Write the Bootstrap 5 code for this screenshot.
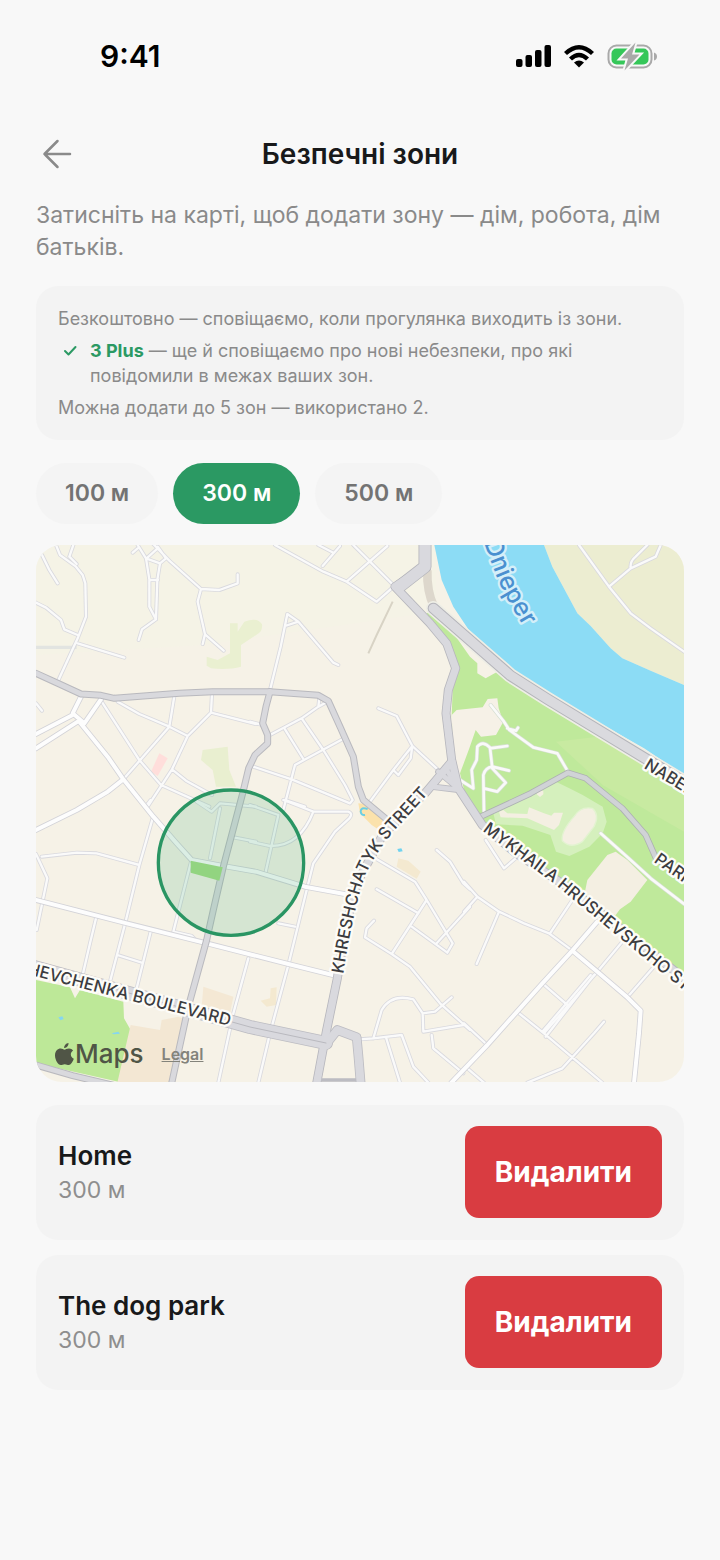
<!DOCTYPE html>
<html lang="uk">
<head>
<meta charset="utf-8">
<meta name="viewport" content="width=device-width, initial-scale=1">
<title>Безпечні зони</title>
<link href="https://cdn.jsdelivr.net/npm/bootstrap@5.3.0/dist/css/bootstrap.min.css" rel="stylesheet">
<style>
  body { background: #f8f8f8; color: #18191a; font-family: Inter, "Liberation Sans", sans-serif; }
  .status { height: 112px; padding: 0 63px 0 100px; }
  .clock { font-size: 30px; font-weight: 600; color: #000; line-height: 32px; }
  .screen { padding: 0 36px 36px; }
  .topbar { height: 84px; }
  .back { left: 0; top: 0; bottom: 0; width: 44px; color: #8a8a8a; }
  .screen-title { font-size: 28px; font-weight: 600; line-height: 36px; }
  .intro { font-size: 23px; line-height: 32px; color: #8a8a8a; padding-top: 3px; margin-bottom: 23px; }
  .panel { background: #f3f3f3; border-radius: 22px; }
  .info { padding: 20px 22px; font-size: 18px; line-height: 25px; color: #8a8a8a; gap: 7px; margin-bottom: 23px; }
  .brand { color: #2b9963; font-weight: 700; }
  .tick { width: 32px; height: 25px; color: #2b9963; }
  .radii { gap: 15px; margin-bottom: 21px; }
  .radii .btn { --bs-btn-bg: #f4f4f4; --bs-btn-color: #737373; --bs-btn-active-bg: #2b9963; --bs-btn-active-color: #fff; --bs-btn-border-width: 0; --bs-btn-border-radius: 31px; font-size: 23px; font-weight: 600; line-height: 33px; padding: 14px 29px; }
  .map { border-radius: 26px; margin-bottom: 23px; }
  .map-credit { left: 18px; bottom: 12px; gap: 18px; color: #505546; }
  .map-brand { font-size: 26px; font-weight: 500; line-height: 32px; }
  .map-legal { font-size: 16px; font-weight: 600; line-height: 24px; color: #83837b; }
  .map-label { font-family: Inter, "Liberation Sans", sans-serif; font-size: 50px; font-weight: 500; fill: #3c3c40; stroke: #fdfcf8; stroke-width: 14px; stroke-linejoin: round; paint-order: stroke; }
  .map-river { font-size: 75px; fill: #4a90d0; stroke: #d4eff9; }
  .zones { gap: 15px; }
  .zone { padding: 21px 22px 22px; }
  .zone-name { font-size: 26px; font-weight: 600; line-height: 36px; }
  .zone-size { font-size: 23px; line-height: 32px; color: #8e8e8e; }
  .remove { --bs-btn-bg: #d93c41; --bs-btn-color: #fff; --bs-btn-hover-bg: #c43338; --bs-btn-hover-color: #fff; --bs-btn-border-width: 0; --bs-btn-border-radius: 14px; font-size: 28px; font-weight: 700; line-height: 36px; padding: 28px 30px; }
</style>
</head>
<body>
<div class="status d-flex align-items-center justify-content-between">
  <span class="clock">9:41</span>
  <div class="d-flex align-items-center">
    <svg width="142" height="30" viewBox="0 0 142 30" aria-hidden="true">
      <g fill="#000"><rect x="1" y="18" width="6.500" height="8" rx="2"/><rect x="10.500" y="14" width="6.500" height="12" rx="2"/><rect x="20" y="9" width="6.500" height="17" rx="2"/><rect x="29.500" y="4" width="6.500" height="22" rx="2"/></g>
      <g fill="none" stroke="#000" stroke-width="4.400"><path d="M50.500 12.500Q64 0 77.500 12.500"/><path d="M55.500 18Q64 10 72.500 18"/></g>
      <path d="M59 21.500Q64 17.500 69 21.500L64 26.500Z"/>
      <rect x="93.500" y="4.500" width="43" height="22" rx="8" fill="none" stroke="#a9a9a9" stroke-width="2"/>
      <rect x="96.500" y="7.500" width="37" height="16" rx="5" fill="#35c759"/>
      <path d="M139 11.500q3 1 3 4t-3 4z" fill="#a9a9a9"/>
      <path d="M120.500 1.500L106 17.500H113L109.500 29.500L124.500 13.500H117Z" fill="#a9a9a9" stroke="#f8f8f8" stroke-width="4" paint-order="stroke"/>
    </svg>
  </div>
</div>

<main class="screen">
  <header class="topbar position-relative d-flex align-items-center justify-content-center">
    <button type="button" class="back btn border-0 p-0 position-absolute d-flex align-items-center" aria-label="Назад">
      <svg width="44" height="36" viewBox="0 0 44 36" fill="none" stroke="currentColor" stroke-width="2.500" stroke-linecap="round" stroke-linejoin="round"><path d="M34 18H8.500M21.500 5L8.500 18L21.500 31"/></svg>
    </button>
    <h1 class="screen-title m-0">Безпечні зони</h1>
  </header>

  <p class="intro">Затисніть на карті, щоб додати зону — дім, робота, дім батьків.</p>

  <section class="panel info d-flex flex-column">
    <div>Безкоштовно — сповіщаємо, коли прогулянка виходить із зони.</div>
    <div class="d-flex">
      <svg class="tick flex-shrink-0" viewBox="0 0 32 25" fill="none" stroke="currentColor" stroke-width="2" stroke-linecap="round" stroke-linejoin="round" aria-hidden="true"><path d="M7 13L10.500 16.500L17.500 9"/></svg>
      <div><span class="brand">3 Plus</span> — ще й сповіщаємо про нові небезпеки, про які повідомили в межах ваших зон.</div>
    </div>
    <div>Можна додати до 5 зон — використано 2.</div>
  </section>

  <div class="radii d-flex" role="radiogroup" aria-label="Радіус зони">
    <input class="btn-check" type="radio" name="radius" id="r100"><label class="btn" for="r100">100 м</label>
    <input class="btn-check" type="radio" name="radius" id="r300" checked><label class="btn" for="r300">300 м</label>
    <input class="btn-check" type="radio" name="radius" id="r500"><label class="btn" for="r500">500 м</label>
  </div>

  <section class="map position-relative overflow-hidden">
    <svg class="d-block w-100" viewBox="0 0 1944 1611" role="img" aria-label="Карта зон">
      <defs>
        <g id="streets">
          <g transform="translate(0 -15)"><path d="M60 15L72 45 120 80 140 105 148 130 150 230 125 295 65 425M112 15L100 50 122 72M18 45L40 90 65 130M0 188L30 203 75 240 85 268 125 285M125 310L265 353M305 15L330 55 340 118 340 200 360 238 318 268 308 300M290 38L305 25M365 20L390 55 372 70 364 120 360 238M330 55L372 70M335 52L365 25M340 120H366M350 10L400 62 495 147 550 150 605 130V103M495 147L485 185 507 283 500 312M507 283L563 332M0 490L18 512M245 485L310 522 400 560 455 588M415 468L400 560 262 718M528 460L525 518 455 588 408 688 335 800M525 518L660 552M197 485L310 660 375 735 520 800M408 688L450 722 528 765"/></g>
          <g transform="translate(642 -15)"><path d="M75 15L220 95 290 125 380 185 425 145M205 15L250 38M270 18L218 78M310 15L360 65 430 135M412 18L290 125M265 375L250 368 145 245 112 222 92 320 60 450M145 245L105 258M0 545L38 555M60 585L155 535 205 500 232 485M205 500L208 475M105 568L162 660M155 535L220 630 285 735 308 780 300 790M283 595L162 660 135 675 100 810M10 680L125 718 300 790M385 505L440 528 487 618 565 690M487 618L430 690 360 785M487 618L482 655 445 705 430 690M105 780L165 800"/></g>
          <g transform="translate(1284 -15)"><path d="M345 15L435 140 500 220 560 265 660 335M435 140L500 85Q497 65 515 50L550 15M500 85L575 50 590 15"/></g>
          <g transform="translate(-18 765)"><path d="M35 170L140 158 200 160 328 195M18 162L52 235 20 390M368 55L328 195 285 372 240 545M198 355L180 430 158 525M362 395L320 565M262 465L335 488M483 185L430 395 485 408 495 418M570 25L540 175M500 5L545 35 570 10 678 20M610 112L678 125M655 475L610 640 565 848M348 18L362 0"/></g>
          <g transform="translate(642 765)"><path d="M100 0L190 35 295 35Q310 40 298 55L255 95 190 190 165 290 115 495 60 700 25 848M190 35Q150 140 60 138L0 125M85 45L45 225M85 370L135 380M0 15L85 45M370 172L495 245 530 300 608 430 592 458 485 380M380 268L505 340M530 300L425 462M372 362L350 385 345 412 425 462 480 500 570 610 660 690M660 320L560 430M560 150L600 185 640 250 660 268M370 715L395 630Q425 580 490 598L518 640 520 695 640 675M605 592L555 635 518 640M330 718L370 715 455 705 490 800 535 848M408 712L450 848M545 705L550 745 640 820"/></g>
          <g transform="translate(1284 765)"><path d="M0 245L40 290 105 335 180 370 255 400 325 452M105 335L38 492M40 290L0 335M325 300L258 400M475 425L400 515 240 700M380 525L235 695M390 525L245 710M570 500L490 592M235 550L310 615M165 640L240 700 325 772 415 848M0 670L70 735M10 805L60 848M420 665L390 700 325 772 295 805 190 848M65 120L120 205 155 175"/></g>
        </g>
        <g id="avenues">
          <path d="M135 455L110 505 145 535 195 463M0 567L110 510M0 610L125 530M130 530L215 635 262 703 352 815 422 895 467 945 562 963 660 980 807 1025 942 1050M0 855L122 795 215 740 262 703M0 1065L272 1135 512 1195 757 1257 902 1293"/>
          <g transform="translate(1284 765)"><path d="M325 452L400 515 490 592 530 632 525 700 510 848M400 365L325 452 235 550 70 735-38 848"/></g>
        </g>
        <g id="highways">
          <path d="M0 385L70 417 135 447 195 451 235 460 430 445 530 440 702 440 847 451 877 468 912 545 952 635 967 725 982 765 1070 838"/>
          <path d="M702 440L690 485 680 535 695 570 695 595 657 630 638 670 620 745 562 965 532 1095 512 1185 457 1385 407 1615"/>
          <path d="M0 1560L110 1592 250 1625"/>
        </g>
        <g id="arteries">
          <path d="M1167 0V65L1077 125 1182 235 1232 295 1259 370 1237 435 1230 505 1247 645 1267 730 1339 840 1434 920 1600 1030 1944 1300"/>
          <path d="M1247 650L1167 745 1040 870 965 1010 930 1140 904 1300 872 1455 842 1615"/>
        </g>
        <path id="ramps" d="M1187 725L1272 735M1207 680L1267 730M1228 668L1267 730"/>
        <path id="parkpaths" d="M1364 480L1404 530 1420 555 1492 607 1564 625 1596 680M1414 550L1440 557 1446 548M1272 705L1312 730 1307 675 1322 645 1324 605Q1340 585 1362 608L1369 670 1409 713 1384 740 1344 730M1362 610L1414 603M1344 800L1342 690Q1348 668 1369 665L1419 677M1694 865L1784 945 1844 1000 1944 1077"/>
        <path id="embankment" d="M1192 190L1284 270 1424 392 1534 462 1844 650 1960 720"/>
        <path id="plaza" d="M880 1485L904 1455 962 1477 967 1530 974 1615"/>
        <path id="boulevard" d="M-20 1262L300 1350 642 1446 870 1494"/>
        <path id="parkroad" d="M1334 815L1484 745 1596 683 1649 700 1759 790 1829 870 1860 940 1960 1010"/>
        <path id="p-khr" d="M922 1287C935 1200 955 1090 985 1000C1010 935 1060 870 1100 830L1200 720"/>
        <path id="p-myk" d="M1339 857L1546 1010 1656 1100 1780 1202 1990 1375"/>
        <path id="p-shev" d="M-142 1259L-2 1294 250 1359 580 1443"/>
        <path id="p-nab" d="M1822 668L2040 800"/>
        <path id="p-park" d="M1852 950L2080 1110"/>
        <path id="p-dni" d="M1344 -9Q1375 85 1408 152L1500 310"/>
      </defs>

      <rect width="1944" height="1611" fill="#f6f2e7"/>
      <path d="M0 0H1200V200L500 300 0 330Z" fill="#f5f3e6"/>
      <!-- river and far bank -->
      <path d="M1524 0L1549 65 1624 205 1664 243 1724 310 1759 340 1844 377 1944 420V0Z" fill="#ecedd1"/>
      <path d="M1195 0L1217 105 1252 185 1297 253 1434 375 1534 445 1684 530 1824 610 1944 690V420L1844 377 1759 340 1724 310 1664 243 1624 205 1549 65 1524 0Z" fill="#8cdcf5"/>
      <!-- riverside park -->
      <path d="M1172 205L1192 200 1242 250 1302 335 1324 355V385L1349 400 1384 380 1434 420 1534 485 1684 575 1844 665 1944 740V1290L1339 840 1260 700 1247 510 1250 435 1268 375Z" fill="#bfe99b"/>
      <path d="M1560 590L1684 575 1844 665 1944 740V860L1700 720Z" fill="#c8eaa1"/>
      <path d="M1247 510L1262 495 1340 487 1355 462 1384 460 1388 490 1402 530 1380 570 1335 575 1319 555 1300 610 1272 685 1288 750 1332 815 1300 800 1256 700Z" fill="#f6f1e7"/>
      <path d="M1372 805L1500 745 1560 710 1600 730 1640 750 1700 785 1712 830 1700 865 1660 905 1600 933 1560 920 1543 870 1460 842 1380 838Z" fill="#d5f0bd"/>
      <g transform="translate(1284 765)" fill="#f4efe2">
        <path d="M330 50Q350 18 385 25Q408 45 390 80L355 125Q320 148 295 122Q290 95 330 50Z" stroke="#e3f3d1" stroke-width="4"/>
        <path d="M195 22L240 40 262 47 270 38 297 38 285 75 270 90 190 55 110 52 105 35 118 30 130 40 190 42Z"/>
        <path d="M455 155L490 180 550 240 500 305 468 328 455 345 400 330 362 280 370 240 430 165Z"/>
        <path d="M222-32l16 5v10l-10 8-10-8z"/>
      </g>
      <!-- small greens and buildings -->
      <path d="M582 235H605V260L625 230Q665 215 678 238 680 255 668 265L615 300V365Q580 375 525 370L512 362V335L545 345 582 325Z" fill="#eaf0d1"/>
      <g transform="translate(0 -15)" fill="#e9efd0">
        <path d="M500 630L575 620 580 690 600 740 540 740 530 690 495 660Z"/>
        <path d="M370 640L395 655 365 708 345 695Z" fill="#ffdedb"/>
      </g>
      <g transform="translate(-18 765)">
        <path d="M18 540L120 562 135 595 150 570 280 605 282 655 302 690 265 845 18 790Z" fill="#bde898"/>
        <path d="M302 675L390 690 395 660 445 650 470 660 422 848H262Z" fill="#f3e7d3"/>
        <path d="M520 560L610 590 600 640 515 620Z" fill="#f4e8d4"/>
        <path d="M85 652l12-3 4 8-10 4zM245 700l20-5 5 6-18 2z" fill="#86d6f0"/>
      </g>
      <g transform="translate(642 765)">
        <path d="M325 10L345 12 420 75 400 98 365 75 330 40Z" fill="#fbe2ac"/>
        <path d="M353 27Q332 20 332 35 334 47 345 45" fill="none" stroke="#6bcfe3" stroke-width="6"/>
        <path d="M442 147l12-2 4 9-12 2z" fill="#6fd3f0"/>
        <path d="M445 175L475 182 512 215 500 236 440 200Z" fill="#f4e9d0"/>
        <path d="M62 565L80 562 78 615 50 620 32 602 60 595Z" fill="#f4e9d0"/>
      </g>
      <path d="M1174 75Q1172 140 1194 185" fill="none" stroke="#ddd7cc" stroke-width="26"/>
      <path d="M1070 170L1022 270 997 325" fill="none" stroke="#d8d3c5" stroke-width="6"/>
      <path d="M0 307H122" stroke="#e2e4e1" stroke-width="10"/>

      <!-- road network: casing first, surface on top -->
      <g fill="none" stroke-linejoin="round" stroke-linecap="round">
        <use href="#streets" stroke="#d9d9de" stroke-width="12"/>
        <use href="#streets" stroke="#fafafa" stroke-width="7"/>
        <use href="#avenues" stroke="#d3d3d8" stroke-width="17"/>
        <use href="#avenues" stroke="#fdfdfd" stroke-width="12"/>
        <use href="#parkpaths" stroke="#d6dfd3" stroke-width="12"/>
        <use href="#parkpaths" stroke="#fafaf9" stroke-width="8"/>
        <use href="#parkroad" stroke="#adb1b2" stroke-width="19"/>
        <use href="#parkroad" stroke="#d0d3d6" stroke-width="14"/>
        <use href="#highways" stroke="#b9b9be" stroke-width="21"/>
        <use href="#highways" stroke="#d9d9dd" stroke-width="15"/>
        <use href="#ramps" stroke="#bcbcc2" stroke-width="19"/>
        <use href="#arteries" stroke="#b7b7bd" stroke-width="27"/>
        <path d="M1167 0V65L1090 125" stroke="#b7b7bd" stroke-width="39"/>
        <use href="#boulevard" stroke="#bcbcc2" stroke-width="42"/>
        <use href="#plaza" stroke="#bcbcc2" stroke-width="29"/>
        <path d="M850 1605H970" stroke="#bcbcc2" stroke-width="10"/>
        <use href="#ramps" stroke="#d9d9de" stroke-width="14"/>
        <use href="#arteries" stroke="#d9d9de" stroke-width="22"/>
        <path d="M1167 0V65L1090 125" stroke="#d9d9de" stroke-width="34"/>
        <use href="#boulevard" stroke="#d9d9de" stroke-width="37"/>
        <use href="#plaza" stroke="#d9d9de" stroke-width="24"/>
        <use href="#boulevard" stroke="#b9b9bf" stroke-width="3"/>
        <use href="#embankment" stroke="#eeeee6" stroke-width="44"/>
        <use href="#embankment" stroke="#b4b4ba" stroke-width="34"/>
        <use href="#embankment" stroke="#dadade" stroke-width="28"/>
      </g>

      <!-- selected zone -->
      <path d="M464 947L560 967 550 1007 464 983Z" fill="#a4dd83"/>
      <circle cx="585" cy="953" r="218" fill="#41ae76" fill-opacity=".18" stroke="#2a9563" stroke-width="10"/>

      <text class="map-label"><textPath href="#p-khr">KHRESHCHATYK STREET</textPath></text>
      <text class="map-label"><textPath href="#p-myk">MYKHAILA HRUSHEVSKOHO ST</textPath></text>
      <text class="map-label" text-anchor="end"><textPath href="#p-shev" startOffset="100%">SHEVCHENKA BOULEVARD</textPath></text>
      <text class="map-label"><textPath href="#p-nab">NABER</textPath></text>
      <text class="map-label"><textPath href="#p-park">PARK</textPath></text>
      <text class="map-label map-river"><textPath href="#p-dni">Dnieper</textPath></text>
    </svg>
    <div class="map-credit position-absolute d-flex align-items-center">
      <span class="map-brand d-flex align-items-center">
        <svg width="21" height="25" viewBox="0 0 21 25" fill="currentColor" aria-hidden="true"><path d="M14.500 1C14.700 3.800 12.600 6 10.200 6C10 3.500 12 1.300 14.500 1ZM10.500 7.700C11.600 7.700 12.700 6.500 15 6.500C16.800 6.500 18.200 7.300 19.100 8.600C15.800 10.700 16.200 15.300 19.800 16.800C18.700 20 16.800 23 14.800 23C13.300 23 12.600 22.200 10.800 22.200C9 22.200 8.100 23 6.800 23C4.200 23 1 17.900 1 13.500C1 9 3.800 6.600 6.600 6.600C8.300 6.600 9.600 7.700 10.500 7.700Z"/></svg>
        Maps
      </span>
      <a class="map-legal" href="#legal">Legal</a>
    </div>
  </section>

  <section class="zones d-flex flex-column">
    <article class="panel zone d-flex justify-content-between align-items-center">
      <div><div class="zone-name">Home</div><div class="zone-size">300 м</div></div>
      <button type="button" class="btn remove">Видалити</button>
    </article>
    <article class="panel zone d-flex justify-content-between align-items-center">
      <div><div class="zone-name">The dog park</div><div class="zone-size">300 м</div></div>
      <button type="button" class="btn remove">Видалити</button>
    </article>
  </section>
</main>
<script src="https://cdn.jsdelivr.net/npm/bootstrap@5.3.0/dist/js/bootstrap.bundle.min.js"></script>
</body>
</html>
